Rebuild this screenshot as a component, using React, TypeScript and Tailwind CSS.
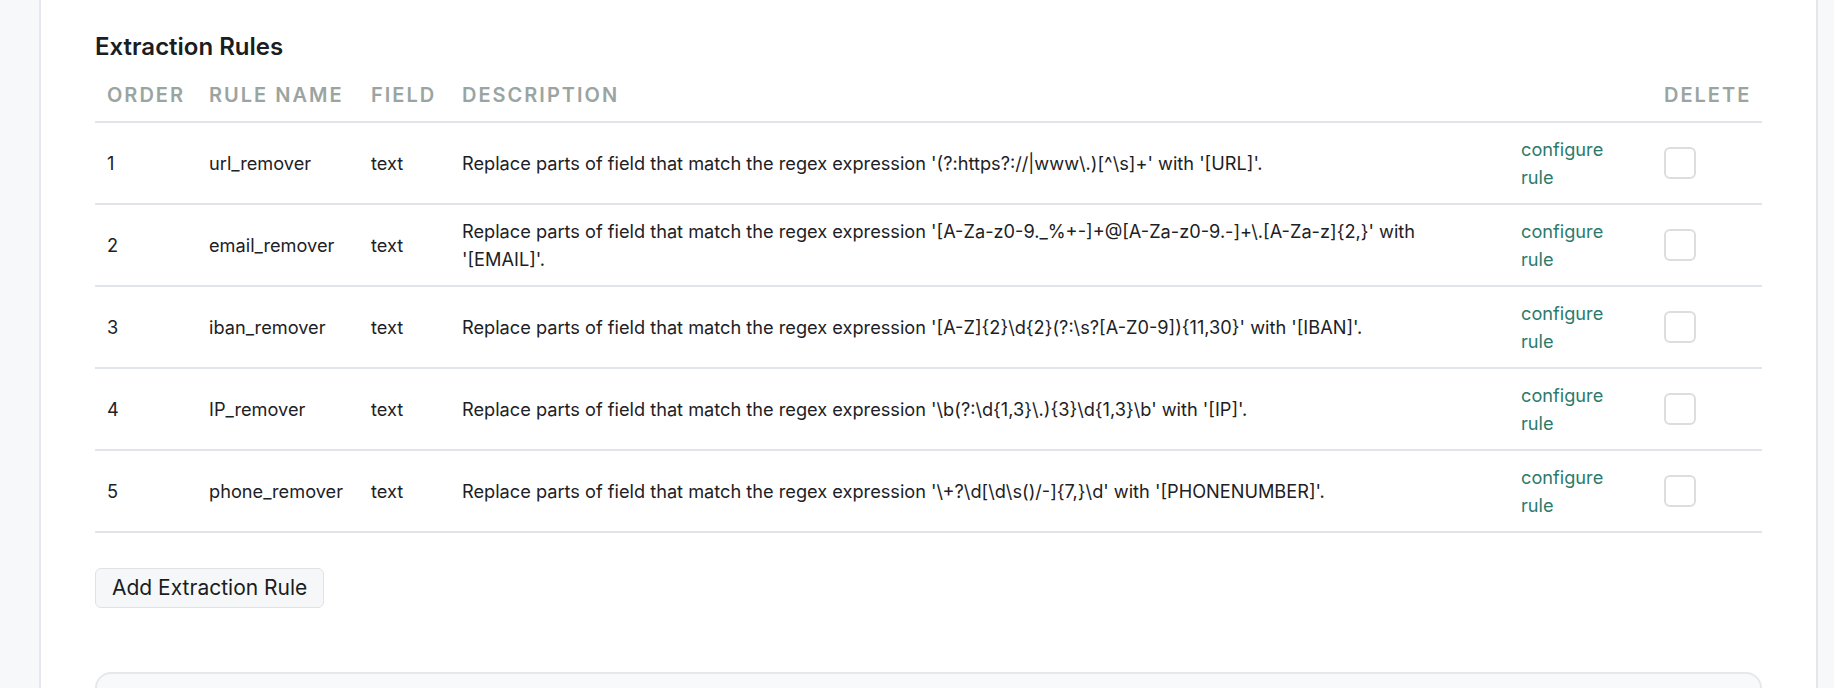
const rules = [
  {
    order: 1,
    name: "url_remover",
    field: "text",
    description:
      "Replace parts of field that match the regex expression '(?:https?://|www\\.)[^\\s]+' with '[URL]'.",
  },
  {
    order: 2,
    name: "email_remover",
    field: "text",
    description:
      "Replace parts of field that match the regex expression '[A-Za-z0-9._%+-]+@[A-Za-z0-9.-]+\\.[A-Za-z]{2,}' with '[EMAIL]'.",
  },
  {
    order: 3,
    name: "iban_remover",
    field: "text",
    description:
      "Replace parts of field that match the regex expression '[A-Z]{2}\\d{2}(?:\\s?[A-Z0-9]){11,30}' with '[IBAN]'.",
  },
  {
    order: 4,
    name: "IP_remover",
    field: "text",
    description:
      "Replace parts of field that match the regex expression '\\b(?:\\d{1,3}\\.){3}\\d{1,3}\\b' with '[IP]'.",
  },
  {
    order: 5,
    name: "phone_remover",
    field: "text",
    description:
      "Replace parts of field that match the regex expression '\\+?\\d[\\d\\s()/-]{7,}\\d' with '[PHONENUMBER]'.",
  },
];

function HeaderCell({ children }: { children?: React.ReactNode }) {
  return (
    <th className="px-3 pt-4 pb-3 text-left text-xl font-semibold uppercase tracking-widest text-[#9aa5a1]">
      {children}
    </th>
  );
}

export default function App() {
  return (
    <div className="h-screen overflow-hidden bg-[#f7f8fa] pl-[39px] pr-[16px] font-['Inter',sans-serif] text-[#1d2125]">
      <div className="h-full border-x-2 border-[#e4e7eb] bg-white px-[54px] pt-[31px]">
        <h2 className="text-2xl leading-8 font-semibold text-[#1a1d21]">
          Extraction Rules
        </h2>

        <table className="mt-0.5 w-full table-fixed border-collapse">
          <colgroup>
            <col className="w-[102px]" />
            <col className="w-[162px]" />
            <col className="w-[91px]" />
            <col />
            <col className="w-[143px]" />
            <col className="w-[110px]" />
          </colgroup>
          <thead>
            <tr className="border-b-2 border-[#e1e4e8]">
              <HeaderCell>Order</HeaderCell>
              <HeaderCell>Rule name</HeaderCell>
              <HeaderCell>Field</HeaderCell>
              <HeaderCell>Description</HeaderCell>
              <HeaderCell />
              <HeaderCell>Delete</HeaderCell>
            </tr>
          </thead>
          <tbody className="text-[18.2px] leading-7">
            {rules.map((rule) => (
              <tr key={rule.order} className="border-b-2 border-[#e1e4e8]">
                <td className="px-3 py-3 align-middle">{rule.order}</td>
                <td className="px-3 py-3 align-middle">{rule.name}</td>
                <td className="px-3 py-3 align-middle">{rule.field}</td>
                <td className="px-3 py-3 align-middle">{rule.description}</td>
                <td className="px-3 py-3 align-middle">
                  <a href="#" className="block w-20 text-[#2c7a6d]">
                    configure rule
                  </a>
                </td>
                <td className="px-3 py-3 align-middle">
                  <div className="h-8 w-8 rounded-md border-2 border-[#dddddd] bg-white" />
                </td>
              </tr>
            ))}
          </tbody>
        </table>

        <button className="mt-[35px] rounded-md border border-[#dfe2e6] bg-[#f6f7f8] px-4 py-[5px] text-[21px] leading-7 text-[#1a1d21]">
          Add Extraction Rule
        </button>

        <div className="mt-16 h-24 rounded-2xl border-2 border-[#e6e8eb] bg-[#f8f9fa]" />
      </div>
    </div>
  );
}
